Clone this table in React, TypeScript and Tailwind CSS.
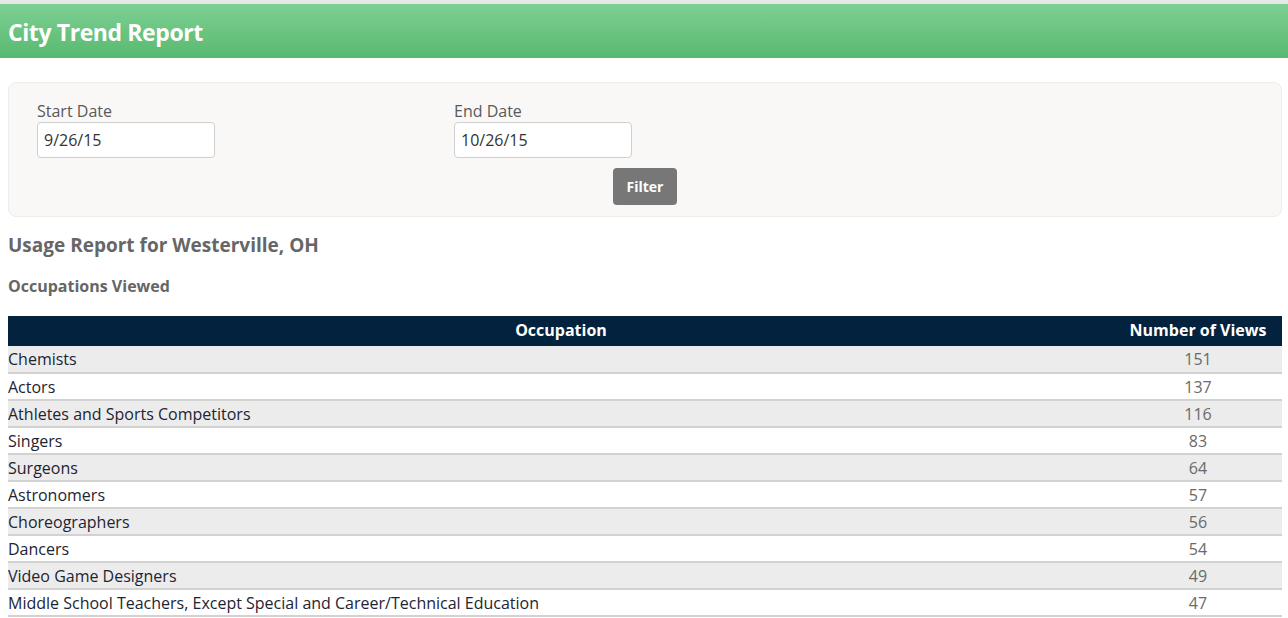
const rows: [string, number][] = [
  ["Chemists", 151],
  ["Actors", 137],
  ["Athletes and Sports Competitors", 116],
  ["Singers", 83],
  ["Surgeons", 64],
  ["Astronomers", 57],
  ["Choreographers", 56],
  ["Dancers", 54],
  ["Video Game Designers", 49],
  ["Middle School Teachers, Except Special and Career/Technical Education", 47],
];

export default function App() {
  return (
    <div className="w-[1288px] h-[618px] overflow-hidden bg-white font-['Open_Sans',sans-serif]">
      {/* header */}
      <div className="border-t-4 border-[#e6e8e6] h-[58px] bg-gradient-to-b from-[#7dd093] to-[#58b96f] flex items-center px-2 pt-[3px]">
        <h1 className="text-[23px] font-bold text-white tracking-[-0.4px]">City Trend Report</h1>
      </div>

      <div className="pl-2 pr-[6px] pt-6">
        {/* filter panel */}
        <div className="h-[135px] rounded-lg border border-[#eeecea] bg-[#f9f8f7] pl-7 pt-[18px]">
          <div className="flex">
            <div className="w-[417px]">
              <label className="block text-[16px] text-[#595959] leading-5">Start Date</label>
              <div className="mt-[1px] w-[178px] h-9 rounded border border-[#cfcfcf] bg-white px-[6px] flex items-center text-[16px] text-[#333]">
                9/26/15
              </div>
            </div>
            <div>
              <label className="block text-[16px] text-[#595959] leading-5">End Date</label>
              <div className="mt-[1px] w-[178px] h-9 rounded border border-[#cfcfcf] bg-white px-[6px] flex items-center text-[16px] text-[#333]">
                10/26/15
              </div>
            </div>
          </div>
          <div className="flex pl-[576px] pt-[10px]">
            <button className="w-[64px] h-[37px] rounded bg-[#777777] text-white text-[14px] font-bold">Filter</button>
          </div>
        </div>

        <h2 className="mt-[14px] text-[19px] font-bold text-[#666] leading-7">Usage Report for Westerville, OH</h2>
        <h3 className="mt-[17px] text-[16px] font-bold text-[#666] leading-5">Occupations Viewed</h3>

        <table className="mt-[20px] w-full border-collapse">
          <thead>
            <tr className="bg-[#03223d] text-white h-[30px]">
              <th className="text-[16px] font-bold text-center leading-5 pb-[3px]">Occupation</th>
              <th className="w-[168px] text-[16px] font-bold text-center leading-5 pb-[3px]">Number of Views</th>
            </tr>
          </thead>
          <tbody>
            {rows.map(([name, n], i) => (
              <tr key={name} className={`h-[27px] border-b-2 border-[#d2d2d2] ${i % 2 === 0 ? "bg-[#ececec]" : "bg-white"}`}>
                <td className="text-[16px] text-[#1d2433] p-0 leading-5">{name}</td>
                <td className="text-[16px] text-[#6a6a6a] text-center p-0 leading-5">{n}</td>
              </tr>
            ))}
          </tbody>
        </table>
      </div>
    </div>
  );
}
